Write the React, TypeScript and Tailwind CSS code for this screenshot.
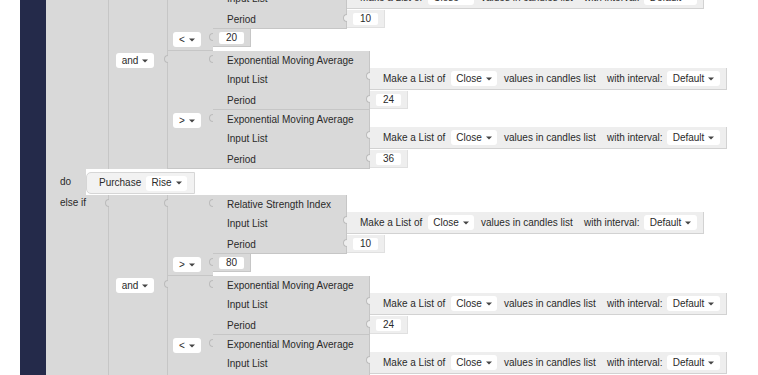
import React from 'react';

type Kind = 'ema' | 'rsi';

function Caret() {
  return (
    <svg width="6" height="4" viewBox="0 0 6 4" className="ml-[4px] shrink-0">
      <path d="M0 0.5h6L3 3.5z" fill="#444" />
    </svg>
  );
}

function Dropdown({ label, className = '' }: { label: string; className?: string }) {
  return (
    <div className={`flex h-[15px] shrink-0 items-center justify-center rounded-[3px] bg-white ${className}`}>
      <span>{label}</span>
      <Caret />
    </div>
  );
}

// little output tab sticking out on the left of a block
function Tab({ className = 'bg-[#d9d9d9]' }: { className?: string }) {
  return (
    <span
      className={`absolute -left-[4px] top-[4px] h-[8px] w-[4px] rounded-l-full border border-r-0 border-[#bcbcbc] ${className}`}
    />
  );
}

function NumberBlock({ value, dark = false }: { value: string; dark?: boolean }) {
  return (
    <div
      className={`relative flex h-[18px] w-[38px] shrink-0 items-center border-b border-r pl-[6px] ${
        dark ? 'border-[#c6c6c6] bg-[#d9d9d9]' : 'border-[#e0e0e0] bg-[#eeeeee]'
      }`}
    >
      <Tab className={dark ? 'bg-[#d9d9d9]' : 'bg-[#eeeeee]'} />
      <div className="flex h-[12px] w-[25px] items-center justify-center rounded-[2px] bg-white">{value}</div>
    </div>
  );
}

function MakeList() {
  return (
    <div className="relative flex h-[22px] w-[357px] items-center border-b border-r border-[#d2d2d2] bg-[#eeeeee] pl-[13px]">
      <Tab className="bg-[#eeeeee]" />
      <span className="w-[68px] shrink-0">Make a List of</span>
      <Dropdown label="Close" className="w-[46px]" />
      <span className="ml-[7px] w-[103px] shrink-0">values in candles list</span>
      <span className="w-[60px] shrink-0">with interval:</span>
      <Dropdown label="Default" className="w-[53px]" />
    </div>
  );
}

function Indicator({ kind, period }: { kind: Kind; period: string }) {
  const ema = kind === 'ema';
  return (
    <div className="flex">
      <div
        className={`relative flex shrink-0 flex-col border-b border-r border-[#c6c6c6] bg-[#d9d9d9] pl-[14px] ${
          ema ? 'w-[157px]' : 'w-[134px]'
        }`}
      >
        <Tab />
        <div className="flex h-[18px] items-center pt-[2px]">
          {ema ? 'Exponential Moving Average' : 'Relative Strength Index'}
        </div>
        <div className="flex h-[21px] items-center">Input List</div>
        <div className="flex h-[19px] items-end pb-[2px]">Period</div>
      </div>
      <div className="flex flex-col">
        <div className="h-[17px]" />
        <MakeList />
        <div className="flex h-[20px] items-center">
          <NumberBlock value={period} />
        </div>
      </div>
    </div>
  );
}

function Compare({ op, first, second }: { op: string; first: React.ReactNode; second: React.ReactNode }) {
  return (
    <div className="flex flex-col">
      <div className="flex">
        <div className="relative w-[46px] shrink-0 border-l border-[#c6c6c6] bg-[#d9d9d9]">
          <Tab />
        </div>
        {first}
      </div>
      <div className="flex">
        <div className="w-[46px] shrink-0 border-b border-l border-[#c6c6c6] bg-[#d9d9d9] pl-[5px] pt-[3px]">
          <Dropdown label={op} className="w-[28px]" />
        </div>
        {second}
      </div>
    </div>
  );
}

function AndBlock({ first, second }: { first: React.ReactNode; second: React.ReactNode }) {
  return (
    <div className="flex flex-col">
      <div className="flex">
        <div className="relative w-[59px] shrink-0 border-l border-[#c6c6c6] bg-[#d9d9d9]">
          <Tab />
        </div>
        {first}
      </div>
      <div className="flex">
        <div className="w-[59px] shrink-0 border-l border-[#c6c6c6] bg-[#d9d9d9] pl-[7px] pt-[2px]">
          <Dropdown label="and" className="w-[38px]" />
        </div>
        {second}
      </div>
    </div>
  );
}

function ValueRow({ value }: { value: string }) {
  return (
    <div className="h-[22px]">
      <NumberBlock value={value} dark />
    </div>
  );
}

export default function App() {
  return (
    <div className="flex h-[375px] w-[758px] overflow-hidden bg-white font-['Liberation_Sans',Arial,sans-serif] text-[10px] leading-[12px] text-[#2a2a2a]">
      <div className="w-[20px] shrink-0" />
      <div className="w-[26px] shrink-0 bg-[#242a4a]" />

      <div className="-mt-[30px] flex flex-col self-start">
        {/* if */}
        <div className="flex">
          <div className="w-[62px] shrink-0 bg-[#d9d9d9] pl-[14px] pt-[2px]">if</div>
          <AndBlock
            first={<Compare op="<" first={<Indicator kind="rsi" period="10" />} second={<ValueRow value="20" />} />}
            second={
              <Compare
                op=">"
                first={<Indicator kind="ema" period="24" />}
                second={<Indicator kind="ema" period="36" />}
              />
            }
          />
        </div>

        {/* do */}
        <div className="flex h-[26px]">
          <div className="flex w-[40px] shrink-0 items-center bg-[#d9d9d9] pl-[14px]">do</div>
          <div className="mt-[3px] flex h-[22px] w-[109px] items-center rounded-l-[5px] border border-[#d6d6d6] bg-[#f2f2f2] pl-[12px]">
            <span className="w-[47px] shrink-0">Purchase</span>
            <Dropdown label="Rise" className="w-[41px]" />
          </div>
        </div>

        {/* else if */}
        <div className="flex">
          <div className="w-[62px] shrink-0 bg-[#d9d9d9] pl-[14px] pt-[2px]">else if</div>
          <AndBlock
            first={<Compare op=">" first={<Indicator kind="rsi" period="10" />} second={<ValueRow value="80" />} />}
            second={
              <Compare
                op="<"
                first={<Indicator kind="ema" period="24" />}
                second={<Indicator kind="ema" period="36" />}
              />
            }
          />
        </div>
      </div>
    </div>
  );
}
